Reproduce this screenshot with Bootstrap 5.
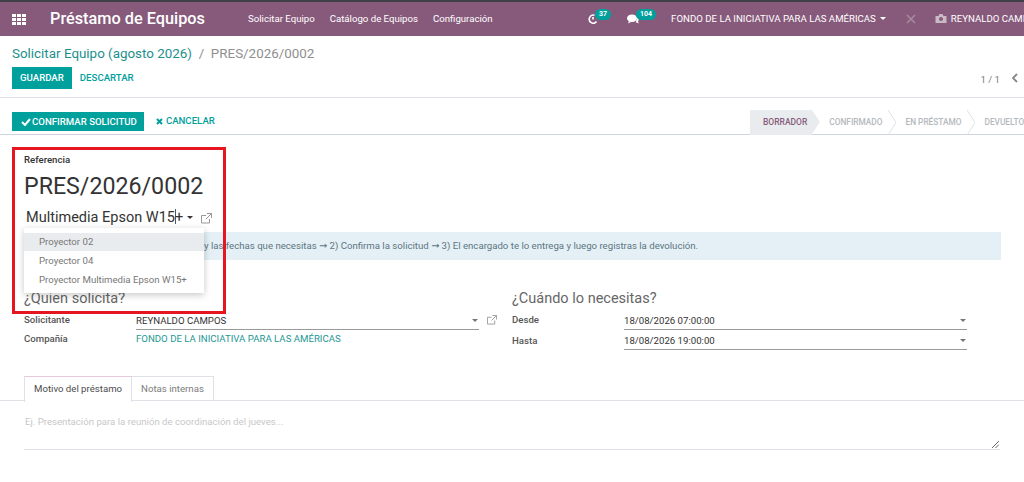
<!DOCTYPE html>
<html lang="es">
<head>
<meta charset="UTF-8">
<title>Préstamo de Equipos</title>
<link rel="stylesheet" href="https://cdn.jsdelivr.net/npm/bootstrap@5.3.0/dist/css/bootstrap.min.css">
<style>
html, body { height: 482px; overflow: hidden; }
body { font-family: Roboto, "Liberation Sans", sans-serif; font-size: 9.65px; color: #4c4c4c; background: #fff; position: relative; width: 1024px; }
a { text-decoration: none; }
svg { flex: none; }
.app-bar { background: #875a7b; border-top: 2px solid #3f3f46; height: 36px; color: #fff; white-space: nowrap; padding-left: 12px; }
.app-title { font-size: 16.3px; font-weight: 500; margin-left: 24px; width: 198px; flex: none; }
.app-menu { gap: 15px; width: 340px; flex: none; }
.pill { background: #00a09d; color: #fff; font-size: 7px; font-weight: 700; border-radius: 7px; padding: 0 4px; line-height: 11px; margin-left: -3px; position: relative; top: -4px; }
.caret-d { display: inline-block; border-top: 3.5px solid currentColor; border-left: 3.5px solid transparent; border-right: 3.5px solid transparent; }
.ms-chat { margin-left: 16px; }
.ms-co { margin-left: 15px; }
.ms-x { margin-left: 20px; }
.ms-cam { margin-left: 19px; }
.ctrl-panel { height: 62px; border-bottom: 1px solid #dee2e6; padding: 9px 6px 0 12px; }
.crumb { font-size: 13.4px; line-height: 17px; color: #8f8f8f; }
.crumb a { color: #1d8f8c; }
.odoo-btn { background: #00a09d; color: #fff; font-size: 9.65px; font-weight: 500; border: 1px solid #00a09d; border-radius: 0; padding: 0 7px; height: 22px; line-height: 20px; }
.odoo-link { color: #00a09d; font-size: 9.65px; font-weight: 500; }
.ctrl-row { margin-top: 5px; }
.pager { color: #7b7b7b; gap: 11px; padding-top: 6px; }
.status-row { height: 37px; border-bottom: 1px solid #ced4da; padding: 14px 0 0 12px; }
.status-btn { height: 19px; line-height: 17px; padding: 0 6px 0 8px; display: flex; align-items: center; gap: 1px; }
.cancel-link { margin-left: 12px; height: 19px; display: flex; align-items: center; gap: 3px; }
.steps { margin-left: auto; height: 25px; margin-top: -2px; width: 274px; overflow: hidden; flex: none; }
.step-item { height: 25px; line-height: 25px; font-size: 8.3px; font-weight: 500; color: #b4b8bd; padding-left: 9px; white-space: nowrap; display: flex; flex: none; }
.step-item svg { margin-left: 6px; flex: none; }
.step-on { background: #e9ecef; color: #875a7b; padding: 0 5px 0 13px; margin-right: 8px; position: relative; font-size: 8.5px; }
.step-on::after { content: ""; position: absolute; left: 100%; top: 0; border-left: 8px solid #e9ecef; border-top: 12.5px solid transparent; border-bottom: 12.5px solid transparent; }
.form-body { padding: 18px 24px 0; }
.ref-label { font-weight: 500; color: #333; line-height: 13px; }
.ref-name { font-size: 23.2px; line-height: 30px; color: #333; margin-top: 5px; }
.prod-wrap { margin-top: 6px; width: 190px; }
.prod-field { width: 170px; height: 22px; border-bottom: 1px solid #7c7c7c; font-size: 14.5px; line-height: 20px; color: #333; padding-left: 2px; flex: none; white-space: nowrap; }
.prod-caret { margin-right: 1px; }
.cursor-bar { display: inline-block; width: 1px; height: 15px; background: #555; margin: 0 -1px 0 0; vertical-align: -2px; }
.banner { background: #e4f0f6; color: #5d7582; height: 28px; line-height: 28px; margin-top: 3px; padding-left: 180px; width: 977px; white-space: nowrap; }
.arrow-g { font-family: "DejaVu Sans", sans-serif; }
.sect-title { font-size: 14.5px; line-height: 18px; color: #666; }
.groups { margin-top: 30px; }
.grp { width: 488px; flex: none; }
.grp-row { display: flex; height: 19px; align-items: center; }
.first-row { margin-top: 3px; }
.when-row { height: 22px; }
.f-label { width: 112px; font-weight: 500; color: #555; flex: none; }
.f-value { width: 343px; height: 18px; border-bottom: 1px solid #9a9a9a; color: #333; line-height: 17px; flex: none; position: relative; }
.f-value .caret-d { position: absolute; right: 1px; top: 7px; color: #777; border-width: 3px 3px 0; }
.ext-link { margin-left: 7px; }
.ext-small { margin-left: 8px; margin-top: -2px; }
.teal-val { color: #1d9794; }
.tabs-row { margin: 24px -24px 0; border-bottom: 1px solid #dee2e6; padding-left: 24px; height: 25px; }
.tab-item { height: 25px; line-height: 24px; padding: 0 9px; color: #7c7c7c; border: 1px solid #dee2e6; border-left: 0; border-bottom: 0; }
.tab-on { color: #4c4c4c; background: #fff; border-left: 1px solid #dee2e6; border-top: 1px solid #e6c9dc; height: 26px; }
.note-area { height: 49px; border-bottom: 1px solid #dee2e6; width: 976px; padding: 14px 1px 0; color: #c8c8c8; position: relative; }
.note-grip { position: absolute; right: 1px; bottom: 1px; }
.pick-menu { position: absolute; left: 24px; top: 228px; width: 180px; height: 65px; background: #fff; box-shadow: 0 2px 7px rgba(0,0,0,.22); padding-top: 5px; z-index: 5; color: #777; }
.pick-item { height: 19px; line-height: 19px; padding-left: 15px; white-space: nowrap; }
.pick-on { background: #e9ecef; height: 18px; line-height: 18px; }
.pick-last { height: 20px; line-height: 20px; }
.red-box { position: absolute; left: 12px; top: 147px; width: 214px; height: 167px; border: 3px solid #e5161f; z-index: 6; pointer-events: none; }
</style>
</head>
<body>
<header class="app-bar d-flex align-items-center">
  <svg width="14" height="11" viewBox="0 0 14 11" fill="#fff"><rect x="0" y="0" width="4" height="3"/><rect x="5" y="0" width="4" height="3"/><rect x="10" y="0" width="4" height="3"/><rect x="0" y="4" width="4" height="3"/><rect x="5" y="4" width="4" height="3"/><rect x="10" y="4" width="4" height="3"/><rect x="0" y="8" width="4" height="3"/><rect x="5" y="8" width="4" height="3"/><rect x="10" y="8" width="4" height="3"/></svg>
  <div class="app-title">Préstamo de Equipos</div>
  <nav class="app-menu d-flex"><span>Solicitar Equipo</span><span>Catálogo de Equipos</span><span>Configuración</span></nav>
  <div class="d-flex align-items-center flex-shrink-0">
    <svg width="10" height="10" viewBox="0 0 10 10" fill="none" stroke="#fff" stroke-width="1.600"><path d="M8.500 7.500A4 4 0 1 1 6.500 1.300M5 3v2.500"/></svg>
    <span class="pill">37</span>
    <svg class="ms-chat" width="12" height="10" viewBox="0 0 12 10" fill="#fff"><ellipse cx="5" cy="4.300" rx="5" ry="3.800"/><path d="M2 7l-1 2.500 3.500-1.800zM10.500 3c1.500 1.500 1.500 3.500.5 4.500l.8 2-3-1.300z"/></svg>
    <span class="pill">104</span>
    <span class="ms-co">FONDO DE LA INICIATIVA PARA LAS AMÉRICAS</span>
    <span class="caret-d ms-1"></span>
    <svg class="ms-x" width="10" height="10" viewBox="0 0 10 10" stroke="#a98ba1" stroke-width="1.500"><path d="M1 1l8 8M9 1L1 9"/></svg>
    <svg class="ms-cam" width="12" height="9" viewBox="0 0 11 9" fill="#c9bac5"><path d="M0 2h3l1-2h3l1 2h3v7H0z"/><circle cx="5.500" cy="5" r="2" fill="#875a7b"/></svg>
    <span class="ms-1">REYNALDO CAMPOS</span>
  </div>
</header>

<section class="ctrl-panel">
  <div class="crumb"><a href="#">Solicitar Equipo (agosto 2026)</a> &nbsp;/&nbsp; PRES/2026/0002</div>
  <div class="ctrl-row d-flex align-items-start">
    <button class="odoo-btn">GUARDAR</button>
    <a class="odoo-link ms-2 align-self-center" href="#">DESCARTAR</a>
    <div class="pager ms-auto d-flex">
      <span>1 / 1</span>
      <svg width="7" height="10" viewBox="0 0 7 10" fill="none" stroke="#888" stroke-width="1.800"><path d="M6 1L2 5l4 4"/></svg>
    </div>
  </div>
</section>

<section class="status-row d-flex align-items-start">
  <button class="odoo-btn status-btn"><svg width="10" height="8" viewBox="0 0 10 8" fill="none" stroke="#fff" stroke-width="2"><path d="M1 4l3 3 5-6"/></svg>CONFIRMAR SOLICITUD</button>
  <a class="odoo-link cancel-link" href="#"><svg width="7" height="7" viewBox="0 0 7 7" stroke="#00a09d" stroke-width="2"><path d="M1 1l5 5M6 1L1 6"/></svg>CANCELAR</a>
  <div class="steps d-flex">
    <div class="step-item step-on">BORRADOR</div>
    <div class="step-item">CONFIRMADO<svg width="8" height="25" viewBox="0 0 8 25" fill="none" stroke="#dee2e6"><path d="M0 0l8 12.500L0 25"/></svg></div>
    <div class="step-item">EN PRÉSTAMO<svg width="8" height="25" viewBox="0 0 8 25" fill="none" stroke="#dee2e6"><path d="M0 0l8 12.500L0 25"/></svg></div>
    <div class="step-item">DEVUELTO</div>
  </div>
</section>

<main class="form-body">
  <div class="ref-label">Referencia</div>
  <div class="ref-name">PRES/2026/0002</div>
  <div class="prod-wrap d-flex align-items-center">
    <div class="prod-field d-flex justify-content-between align-items-center">
      <span>Multimedia Epson W15<span class="cursor-bar"></span>+</span>
      <span class="caret-d prod-caret"></span>
    </div>
    <svg class="ext-link" width="11" height="11" viewBox="0 0 11 11" fill="none" stroke="#999"><path d="M8.500 6v4H.5V2.500H5M6 .5h4.500V5M10.500.5L5 6"/></svg>
  </div>
  <div class="banner">y las fechas que necesitas <span class="arrow-g">→</span> 2) Confirma la solicitud <span class="arrow-g">→</span> 3) El encargado te lo entrega y luego registras la devolución.</div>

  <div class="groups d-flex">
    <div class="grp">
      <div class="sect-title">¿Quien solicita?</div>
      <div class="grp-row first-row"><span class="f-label">Solicitante</span><span class="f-value">REYNALDO CAMPOS<span class="caret-d"></span></span>
        <svg class="ext-small" width="10" height="10" viewBox="0 0 11 11" fill="none" stroke="#999"><path d="M8.500 6v4H.5V2.500H5M6 .5h4.500V5M10.500.5L5 6"/></svg></div>
      <div class="grp-row"><span class="f-label">Compañía</span><span class="teal-val">FONDO DE LA INICIATIVA PARA LAS AMÉRICAS</span></div>
    </div>
    <div class="grp">
      <div class="sect-title">¿Cuándo lo necesitas?</div>
      <div class="grp-row first-row"><span class="f-label">Desde</span><span class="f-value">18/08/2026 07:00:00<span class="caret-d"></span></span></div>
      <div class="grp-row when-row"><span class="f-label">Hasta</span><span class="f-value">18/08/2026 19:00:00<span class="caret-d"></span></span></div>
    </div>
  </div>

  <div class="tabs-row d-flex">
    <div class="tab-item tab-on">Motivo del préstamo</div>
    <div class="tab-item">Notas internas</div>
  </div>
  <div class="note-area">Ej. Presentación para la reunión de coordinación del jueves...
    <svg class="note-grip" width="7" height="7" viewBox="0 0 7 7" stroke="#666"><path d="M0 7L7 0M3.500 7L7 3.500"/></svg>
  </div>
</main>

<div class="pick-menu">
  <div class="pick-item pick-on">Proyector 02</div>
  <div class="pick-item">Proyector 04</div>
  <div class="pick-item pick-last">Proyector Multimedia Epson W15+</div>
</div>
<div class="red-box"></div>

<script src="https://cdn.jsdelivr.net/npm/bootstrap@5.3.0/dist/js/bootstrap.bundle.min.js"></script>
</body>
</html>
